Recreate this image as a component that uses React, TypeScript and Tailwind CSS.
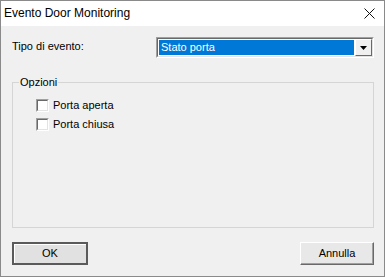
import React from "react";

function CloseIcon() {
  return (
    <svg width="11" height="11" viewBox="0 0 11 11" className="block">
      <path d="M0.5 0.5 L10.5 10.5 M10.5 0.5 L0.5 10.5" stroke="#111" strokeWidth="1" fill="none" />
    </svg>
  );
}

function CheckRow({ label }: { label: string }) {
  return (
    <label className="flex items-center h-[13px] gap-[4px]">
      <span className="w-[13px] h-[13px] shrink-0 flex border border-t-[#a0a0a0] border-l-[#a0a0a0] border-r-white border-b-white">
        <span className="flex-1 bg-white border border-t-[#696969] border-l-[#696969] border-r-[#e3e3e3] border-b-[#e3e3e3]" />
      </span>
      <span className="leading-[13px]">{label}</span>
    </label>
  );
}

export default function App() {
  return (
    <div
      className="w-[385px] h-[277px] bg-[#f0f0f0] border border-[#8a8a8a] flex flex-col text-[11px] text-black overflow-hidden"
      style={{ fontFamily: '"Liberation Sans", Arial, sans-serif' }}
    >
      {/* Title bar */}
      <div className="h-[25px] bg-white flex items-center justify-between pl-[3px] pr-[9px] shrink-0">
        <span className="text-[12px] leading-none pb-[1px]">Evento Door Monitoring</span>
        <CloseIcon />
      </div>

      {/* Body */}
      <div className="flex flex-col pl-[11px] pt-[11px]">
        <div className="flex items-start h-[21px]">
          <span className="w-[144px] pt-[3px] leading-[13px]">Tipo di evento:</span>
          <div className="w-[218px] h-[21px] flex border border-t-[#a0a0a0] border-l-[#a0a0a0] border-r-white border-b-white">
            <div className="flex-1 flex border border-t-[#696969] border-l-[#696969] border-r-[#e3e3e3] border-b-[#e3e3e3] bg-white">
              <div className="flex-1 m-[1px] bg-[#0078d7] text-white pl-[2px] flex items-center leading-[13px]">
                Stato porta
              </div>
              <div className="w-[17px] flex items-center justify-center bg-[#f0f0f0] border border-t-white border-l-white border-r-[#696969] border-b-[#696969]">
                <svg width="7" height="4" viewBox="0 0 7 4" className="block">
                  <path d="M0 0 H7 L3.5 4 Z" fill="#000" />
                </svg>
              </div>
            </div>
          </div>
        </div>

        <fieldset className="mt-[18px] w-[362px] h-[152px] border border-[#d5d5d5] px-0 pb-0">
          <legend className="ml-[6px] px-[1px] leading-[13px]">Opzioni</legend>
          <div className="flex flex-col gap-[6px] pl-[23px] pt-[10px]">
            <CheckRow label="Porta aperta" />
            <CheckRow label="Porta chiusa" />
          </div>
        </fieldset>

        <div className="mt-[14px] w-[362px] flex justify-between">
          <button className="w-[76px] h-[23px] bg-[#e1e1e1] border-2 border-[#5a5a5a] shadow-[inset_1px_1px_0_#ffffff] leading-none">
            OK
          </button>
          <button className="w-[74px] h-[23px] bg-[#e8e8e8] border border-t-white border-l-white border-r-[#696969] border-b-[#696969] shadow-[inset_-1px_-1px_0_#a0a0a0] leading-none">
            Annulla
          </button>
        </div>
      </div>
    </div>
  );
}
